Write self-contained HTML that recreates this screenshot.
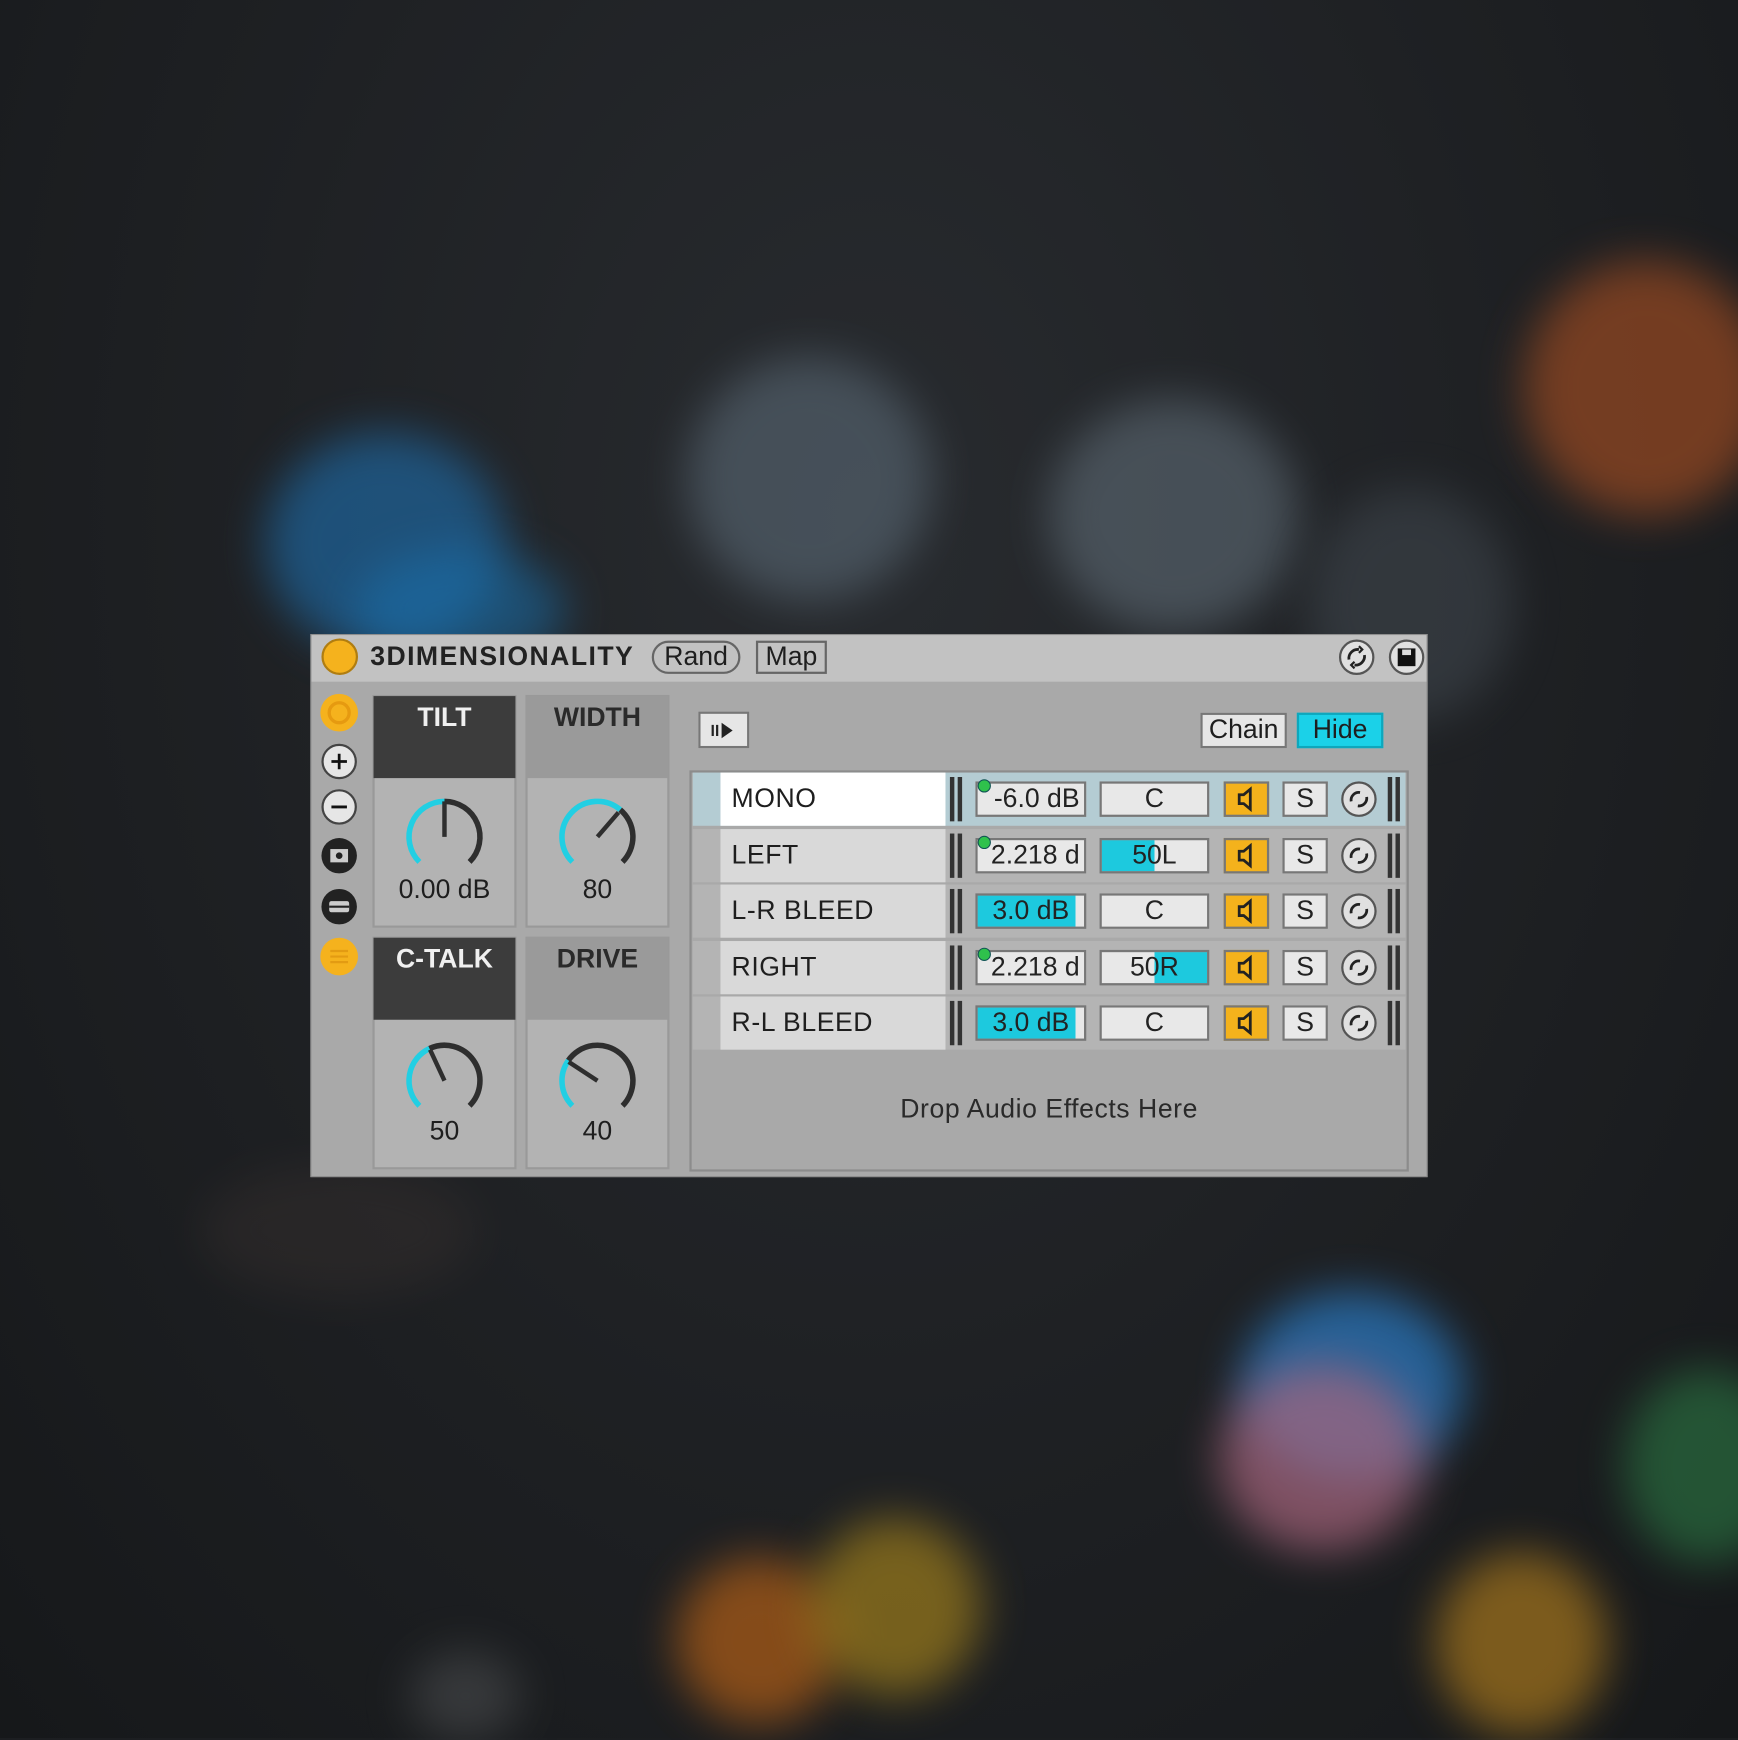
<!DOCTYPE html>
<html><head><meta charset="utf-8"><style>
*{margin:0;padding:0;box-sizing:border-box}
html,body{width:1738px;height:1738px;overflow:hidden;background:#1c1e21}
#s{position:absolute;left:0;top:0;width:1568px;height:1568px;transform:scale(1.10842);transform-origin:0 0;font-family:"Liberation Sans",sans-serif;background:radial-gradient(ellipse at 50% 30%,#282b2f 0%,#1e2023 55%,#16181a 100%)}
.b{position:absolute;border-radius:50%;filter:blur(20px)}
.a{position:absolute}
.t{position:absolute;color:#1e1e1e;white-space:nowrap}
.row{position:absolute;left:625px;width:643px;height:48px;background:#b4b4b4}
.nm{position:absolute;left:25px;width:203px;top:0;height:48px;background:#d9d9d9;font-size:24px;line-height:48px;padding-left:10px;color:#1e1e1e;letter-spacing:.5px}
.bx{position:absolute;top:8px;height:32px;border:2px solid #777;background:#e8e8e8;font-size:24px;line-height:28px;text-align:center;color:#222;overflow:hidden;white-space:nowrap}
.bar{position:absolute;top:4px;width:4px;height:40px;background:#333}
.sp{background:#f4b21c}
.dot{position:absolute;width:12px;height:12px;border-radius:50%;background:#2fc14c;border:1px solid #155}
</style></head><body><div id="s">
<div class="b" style="left:240px;top:390px;width:215px;height:200px;background:#1e6aa6;opacity:.65"></div>
<div class="b" style="left:320px;top:495px;width:190px;height:110px;background:#1a70ac;opacity:.55"></div>
<div class="b" style="left:620px;top:322px;width:220px;height:220px;background:#566470;opacity:.65"></div>
<div class="b" style="left:946px;top:360px;width:225px;height:210px;background:#5a6670;opacity:.65"></div>
<div class="b" style="left:1180px;top:440px;width:185px;height:210px;background:#3e454c;opacity:.6"></div>
<div class="b" style="left:1375px;top:235px;width:220px;height:230px;background:#9a4a22;opacity:.7"></div>
<div class="b" style="left:1120px;top:1165px;width:200px;height:170px;background:#2b7ec9;opacity:.7"></div>
<div class="b" style="left:1100px;top:1230px;width:185px;height:170px;background:#a9667e;opacity:.7"></div>
<div class="b" style="left:1465px;top:1235px;width:150px;height:175px;background:#2c7b45;opacity:.6"></div>
<div class="b" style="left:1295px;top:1400px;width:155px;height:165px;background:#a7771d;opacity:.7"></div>
<div class="b" style="left:610px;top:1405px;width:150px;height:150px;background:#b25f17;opacity:.7"></div>
<div class="b" style="left:730px;top:1370px;width:155px;height:160px;background:#9d7d1c;opacity:.7"></div>
<div class="b" style="left:370px;top:1490px;width:100px;height:80px;background:#4a4c4e;opacity:.6"></div>
<div class="b" style="left:180px;top:1050px;width:250px;height:120px;background:#3a3230;opacity:.4"></div>

<!-- panel -->
<div class="a" style="left:280px;top:572px;width:1008px;height:490px;background:#a9a9a9;border:1px solid #8e8e8e"></div>
<div class="a" style="left:281px;top:573px;width:1006px;height:42px;background:#c2c2c2"></div>
<div class="a" style="left:290px;top:576px;width:33px;height:33px;border-radius:50%;background:#f5b21d;border:2px solid #b07d10"></div>
<div class="t" style="left:334px;top:579px;font-size:24px;font-weight:bold;letter-spacing:1.3px;color:#222">3DIMENSIONALITY</div>
<div class="t" style="left:588px;top:578px;width:80px;height:30px;border:2px solid #666;border-radius:15px;font-size:24px;line-height:26px;text-align:center">Rand</div>
<div class="t" style="left:682px;top:578px;width:64px;height:30px;border:2px solid #666;font-size:24px;line-height:26px;text-align:center">Map</div>
<svg class="a" style="left:1206px;top:575px" width="36" height="36" viewBox="0 0 36 36"><circle cx="18" cy="18" r="15" fill="#e0e0e0" stroke="#555" stroke-width="2"/><path d="M11 20a8 8 0 0 1 9-9M25 16a8 8 0 0 1-9 9" fill="none" stroke="#222" stroke-width="2.5"/><path d="M20 8l3 3-3 3M16 22l-3 3 3 3" fill="none" stroke="#222" stroke-width="2"/></svg>
<svg class="a" style="left:1251px;top:575px" width="36" height="36" viewBox="0 0 36 36"><circle cx="18" cy="18" r="15" fill="#e0e0e0" stroke="#555" stroke-width="2"/><rect x="10" y="10" width="16" height="16" fill="#111"/><rect x="14" y="11" width="8" height="5" fill="#ddd"/></svg>

<!-- left icons -->
<svg class="a" style="left:288px;top:625px" width="36" height="36"><circle cx="18" cy="18" r="17" fill="#f5b21d"/><circle cx="18" cy="18" r="9" fill="none" stroke="#e69a10" stroke-width="3"/></svg>
<svg class="a" style="left:289px;top:670px" width="34" height="34"><circle cx="17" cy="17" r="15" fill="#e6e6e6" stroke="#444" stroke-width="2"/><path d="M10 17h14M17 10v14" stroke="#111" stroke-width="2.5"/></svg>
<svg class="a" style="left:289px;top:711px" width="34" height="34"><circle cx="17" cy="17" r="15" fill="#e6e6e6" stroke="#444" stroke-width="2"/><path d="M10 17h14" stroke="#111" stroke-width="2.5"/></svg>
<svg class="a" style="left:289px;top:755px" width="34" height="34"><circle cx="17" cy="17" r="16" fill="#222"/><rect x="9" y="11" width="16" height="12" fill="#ccc"/><circle cx="17" cy="17" r="3" fill="#222"/></svg>
<svg class="a" style="left:289px;top:801px" width="34" height="34"><circle cx="17" cy="17" r="16" fill="#222"/><rect x="8" y="12" width="18" height="10" rx="2" fill="#ccc"/><path d="M8 17h18" stroke="#222" stroke-width="2"/></svg>
<svg class="a" style="left:288px;top:845px" width="36" height="36"><circle cx="18" cy="18" r="17" fill="#f5b21d"/><path d="M10 13h16M10 18h16M10 23h16" stroke="#e39b12" stroke-width="2"/></svg>

<!-- macros -->
<div class="a" style="left:336px;top:627px;width:130px;height:210px;background:#b3b3b3;border:2px solid #999"></div>
<div class="a" style="left:337px;top:628px;width:128px;height:74px;background:#3c3c3c"></div>
<div class="t" style="left:337px;top:634px;width:128px;text-align:center;font-size:24px;font-weight:bold;color:#f0f0f0">TILT</div>
<div class="a" style="left:474px;top:627px;width:130px;height:210px;background:#b3b3b3;border:2px solid #999"></div>
<div class="a" style="left:475px;top:628px;width:128px;height:74px;background:#9a9a9a"></div>
<div class="t" style="left:475px;top:634px;width:128px;text-align:center;font-size:24px;font-weight:bold;color:#2a2a2a">WIDTH</div>
<div class="a" style="left:336px;top:845px;width:130px;height:210px;background:#b3b3b3;border:2px solid #999"></div>
<div class="a" style="left:337px;top:846px;width:128px;height:74px;background:#3c3c3c"></div>
<div class="t" style="left:337px;top:852px;width:128px;text-align:center;font-size:24px;font-weight:bold;color:#f0f0f0">C-TALK</div>
<div class="a" style="left:474px;top:845px;width:130px;height:210px;background:#b3b3b3;border:2px solid #999"></div>
<div class="a" style="left:475px;top:846px;width:128px;height:74px;background:#9a9a9a"></div>
<div class="t" style="left:475px;top:852px;width:128px;text-align:center;font-size:24px;font-weight:bold;color:#2a2a2a">DRIVE</div>

<svg class="a" style="left:361px;top:715px" width="80" height="80"><path d="M17.37 62.63A32 32 0 0 1 40 8" fill="none" stroke="#22cfe3" stroke-width="5"/><path d="M40 8A32 32 0 0 1 62.63 62.63" fill="none" stroke="#2e2e2e" stroke-width="5"/><path d="M40 40V8" stroke="#2e2e2e" stroke-width="4"/></svg>
<div class="t" style="left:337px;top:789px;width:128px;text-align:center;font-size:24px">0.00 dB</div>
<svg class="a" style="left:499px;top:715px" width="80" height="80"><path d="M17.37 62.63A32 32 0 0 1 60.57 15.49" fill="none" stroke="#22cfe3" stroke-width="5"/><path d="M60.57 15.49A32 32 0 0 1 62.63 62.63" fill="none" stroke="#2e2e2e" stroke-width="5"/><path d="M40 40L59 18" stroke="#2e2e2e" stroke-width="4"/></svg>
<div class="t" style="left:475px;top:789px;width:128px;text-align:center;font-size:24px">80</div>
<svg class="a" style="left:361px;top:935px" width="80" height="80"><path d="M17.37 62.63A32 32 0 0 1 26.48 11" fill="none" stroke="#22cfe3" stroke-width="5"/><path d="M26.48 11A32 32 0 0 1 62.63 62.63" fill="none" stroke="#2e2e2e" stroke-width="5"/><path d="M40 40L27 12" stroke="#2e2e2e" stroke-width="4"/></svg>
<div class="t" style="left:337px;top:1007px;width:128px;text-align:center;font-size:24px">50</div>
<svg class="a" style="left:499px;top:935px" width="80" height="80"><path d="M17.37 62.63A32 32 0 0 1 13.79 21.65" fill="none" stroke="#22cfe3" stroke-width="5"/><path d="M13.79 21.65A32 32 0 1 1 62.63 62.63" fill="none" stroke="#2e2e2e" stroke-width="5"/><path d="M40 40L14 23" stroke="#2e2e2e" stroke-width="4"/></svg>
<div class="t" style="left:475px;top:1007px;width:128px;text-align:center;font-size:24px">40</div>

<!-- chain area -->
<div class="a" style="left:630px;top:642px;width:46px;height:33px;background:#e6e6e6;border:2px solid #777"></div>
<svg class="a" style="left:640px;top:648px" width="28" height="22"><path d="M3 6v10M7 6v10" stroke="#222" stroke-width="2"/><path d="M11 4l10 7-10 7z" fill="#222"/></svg>
<div class="t" style="left:1083px;top:643px;width:78px;height:32px;background:#e6e6e6;border:2px solid #777;font-size:24px;line-height:28px;text-align:center">Chain</div>
<div class="t" style="left:1170px;top:643px;width:78px;height:32px;background:#1bd1e8;border:2px solid #0ea7bc;font-size:24px;line-height:28px;text-align:center">Hide</div>

<div class="a" style="left:622px;top:695px;width:649px;height:362px;background:#a9a9a9;border:2px solid #8c8c8c"></div>
<div class="t" style="left:624px;top:987px;width:645px;text-align:center;font-size:24px;color:#2a2a2a;letter-spacing:.5px">Drop Audio Effects Here</div>

<!-- rows -->
<div class="row" style="top:697px;background:#b4ccd3"><div class="nm" style="background:#fff">MONO</div>
<div class="bar" style="left:232px"></div><div class="bar" style="left:239px"></div>
<div class="bx" style="left:255px;width:100px;text-align:right;padding-right:4px">-6.0 dB</div><div class="dot" style="left:257px;top:6px"></div>
<div class="bx" style="left:367px;width:99px">C</div>
<div class="bx sp" style="left:479px;width:41px"><svg width="37" height="28"><path d="M12 10h4l6-5v18l-6-5h-4z" fill="none" stroke="#222" stroke-width="2.5"/></svg></div>
<div class="bx" style="left:532px;width:41px">S</div>
<svg class="a" style="left:584px;top:7px" width="34" height="34"><circle cx="17" cy="17" r="15" fill="#e0e0e0" stroke="#555" stroke-width="2"/><path d="M10 19a7 7 0 0 1 8-8M24 15a7 7 0 0 1-8 8" fill="none" stroke="#222" stroke-width="2.5"/></svg>
<div class="bar" style="left:627px"></div><div class="bar" style="left:634px"></div></div>

<div class="row" style="top:748px"><div class="nm">LEFT</div>
<div class="bar" style="left:232px"></div><div class="bar" style="left:239px"></div>
<div class="bx" style="left:255px;width:100px;text-align:left;padding-left:12px">2.218 d</div><div class="dot" style="left:257px;top:6px"></div>
<div class="bx" style="left:367px;width:99px;background:linear-gradient(90deg,#1dc9de 50%,#e8e8e8 50%)">50L</div>
<div class="bx sp" style="left:479px;width:41px"><svg width="37" height="28"><path d="M12 10h4l6-5v18l-6-5h-4z" fill="none" stroke="#222" stroke-width="2.5"/></svg></div>
<div class="bx" style="left:532px;width:41px">S</div>
<svg class="a" style="left:584px;top:7px" width="34" height="34"><circle cx="17" cy="17" r="15" fill="#e0e0e0" stroke="#555" stroke-width="2"/><path d="M10 19a7 7 0 0 1 8-8M24 15a7 7 0 0 1-8 8" fill="none" stroke="#222" stroke-width="2.5"/></svg>
<div class="bar" style="left:627px"></div><div class="bar" style="left:634px"></div></div>

<div class="row" style="top:798px"><div class="nm">L-R BLEED</div>
<div class="bar" style="left:232px"></div><div class="bar" style="left:239px"></div>
<div class="bx" style="left:255px;width:100px;background:linear-gradient(90deg,#1dc9de 92%,#e8e8e8 92%)">3.0 dB</div>
<div class="bx" style="left:367px;width:99px">C</div>
<div class="bx sp" style="left:479px;width:41px"><svg width="37" height="28"><path d="M12 10h4l6-5v18l-6-5h-4z" fill="none" stroke="#222" stroke-width="2.5"/></svg></div>
<div class="bx" style="left:532px;width:41px">S</div>
<svg class="a" style="left:584px;top:7px" width="34" height="34"><circle cx="17" cy="17" r="15" fill="#e0e0e0" stroke="#555" stroke-width="2"/><path d="M10 19a7 7 0 0 1 8-8M24 15a7 7 0 0 1-8 8" fill="none" stroke="#222" stroke-width="2.5"/></svg>
<div class="bar" style="left:627px"></div><div class="bar" style="left:634px"></div></div>

<div class="row" style="top:849px"><div class="nm">RIGHT</div>
<div class="bar" style="left:232px"></div><div class="bar" style="left:239px"></div>
<div class="bx" style="left:255px;width:100px;text-align:left;padding-left:12px">2.218 d</div><div class="dot" style="left:257px;top:6px"></div>
<div class="bx" style="left:367px;width:99px;background:linear-gradient(90deg,#e8e8e8 50%,#1dc9de 50%)">50R</div>
<div class="bx sp" style="left:479px;width:41px"><svg width="37" height="28"><path d="M12 10h4l6-5v18l-6-5h-4z" fill="none" stroke="#222" stroke-width="2.5"/></svg></div>
<div class="bx" style="left:532px;width:41px">S</div>
<svg class="a" style="left:584px;top:7px" width="34" height="34"><circle cx="17" cy="17" r="15" fill="#e0e0e0" stroke="#555" stroke-width="2"/><path d="M10 19a7 7 0 0 1 8-8M24 15a7 7 0 0 1-8 8" fill="none" stroke="#222" stroke-width="2.5"/></svg>
<div class="bar" style="left:627px"></div><div class="bar" style="left:634px"></div></div>

<div class="row" style="top:899px"><div class="nm">R-L BLEED</div>
<div class="bar" style="left:232px"></div><div class="bar" style="left:239px"></div>
<div class="bx" style="left:255px;width:100px;background:linear-gradient(90deg,#1dc9de 92%,#e8e8e8 92%)">3.0 dB</div>
<div class="bx" style="left:367px;width:99px">C</div>
<div class="bx sp" style="left:479px;width:41px"><svg width="37" height="28"><path d="M12 10h4l6-5v18l-6-5h-4z" fill="none" stroke="#222" stroke-width="2.5"/></svg></div>
<div class="bx" style="left:532px;width:41px">S</div>
<svg class="a" style="left:584px;top:7px" width="34" height="34"><circle cx="17" cy="17" r="15" fill="#e0e0e0" stroke="#555" stroke-width="2"/><path d="M10 19a7 7 0 0 1 8-8M24 15a7 7 0 0 1-8 8" fill="none" stroke="#222" stroke-width="2.5"/></svg>
<div class="bar" style="left:627px"></div><div class="bar" style="left:634px"></div></div>
</div></body></html>
